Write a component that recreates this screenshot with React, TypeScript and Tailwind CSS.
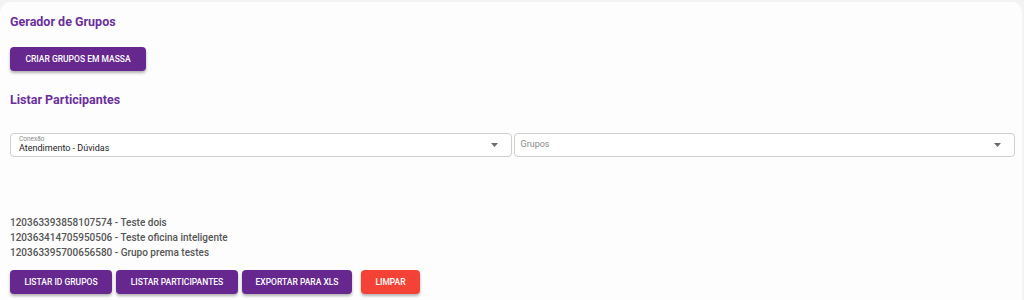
const groups = [
    '120363393858107574 - Teste dois',
    '120363414705950506 - Teste oficina inteligente',
    '120363395700656580 - Grupo prema testes',
];

function Caret() {
    return (
        <svg width="7" height="4" viewBox="0 0 7 4" className="shrink-0">
            <path d="M0 0h7L3.5 4z" fill="#6b6b6b" />
        </svg>
    );
}

function PurpleButton({ label, className = '' }: { label: string; className?: string }) {
    return (
        <button
            className={`h-[24px] rounded-[4px] bg-[#66288f] text-white text-[8.5px] font-medium uppercase shadow-[0_2px_3px_rgba(0,0,0,0.3)] ${className}`}
        >
            {label}
        </button>
    );
}

export default function App() {
    return (
        <div className="w-[1024px] h-[300px] overflow-hidden bg-[#f3f3f3] pt-[2px] pr-[2px] font-['Roboto',sans-serif]">
            <div className="h-[310px] rounded-[10px] bg-[#fdfdfd] pl-[10px] pr-[7px] pt-[11px]">
                <h2 className="text-[12.5px] font-bold text-[#6c2f9c] leading-[18px]">Gerador de Grupos</h2>

                <PurpleButton label="Criar grupos em massa" className="mt-[16px] w-[136px]" />

                <h2 className="mt-[20px] text-[12.5px] font-bold text-[#6c2f9c] leading-[18px]">Listar Participantes</h2>

                <div className="mt-[24px] grid grid-cols-2 gap-[2px]">
                    <div className="h-[24px] rounded-[4px] border border-[#cfcfcf] bg-white flex items-center pl-[8px] pr-[13px]">
                        <div className="flex-1 flex flex-col justify-center">
                            <span className="text-[6.5px] leading-[7px] text-[#8a8a8a]">Conexão</span>
                            <span className="text-[9px] leading-[11px] text-[#222]">Atendimento - Dúvidas</span>
                        </div>
                        <Caret />
                    </div>
                    <div className="h-[24px] rounded-[4px] border border-[#cfcfcf] bg-white flex items-center pl-[6px] pr-[13px]">
                        <span className="flex-1 text-[9px] text-[#8a8a8a]">Grupos</span>
                        <Caret />
                    </div>
                </div>

                <div className="mt-[58px] flex flex-col text-[10px] font-medium text-[#555] leading-[15px]">
                    {groups.map((g) => (
                        <span key={g}>{g}</span>
                    ))}
                </div>

                <div className="mt-[10px] flex gap-[4px]">
                    <PurpleButton label="Listar ID grupos" className="w-[102px]" />
                    <PurpleButton label="Listar participantes" className="w-[122px]" />
                    <PurpleButton label="Exportar para XLS" className="w-[110px]" />
                    <button className="ml-[5px] h-[24px] w-[59px] rounded-[4px] bg-[#f44336] text-white text-[8.5px] font-medium uppercase shadow-[0_2px_3px_rgba(0,0,0,0.3)]">
                        Limpar
                    </button>
                </div>
            </div>
        </div>
    );
}
